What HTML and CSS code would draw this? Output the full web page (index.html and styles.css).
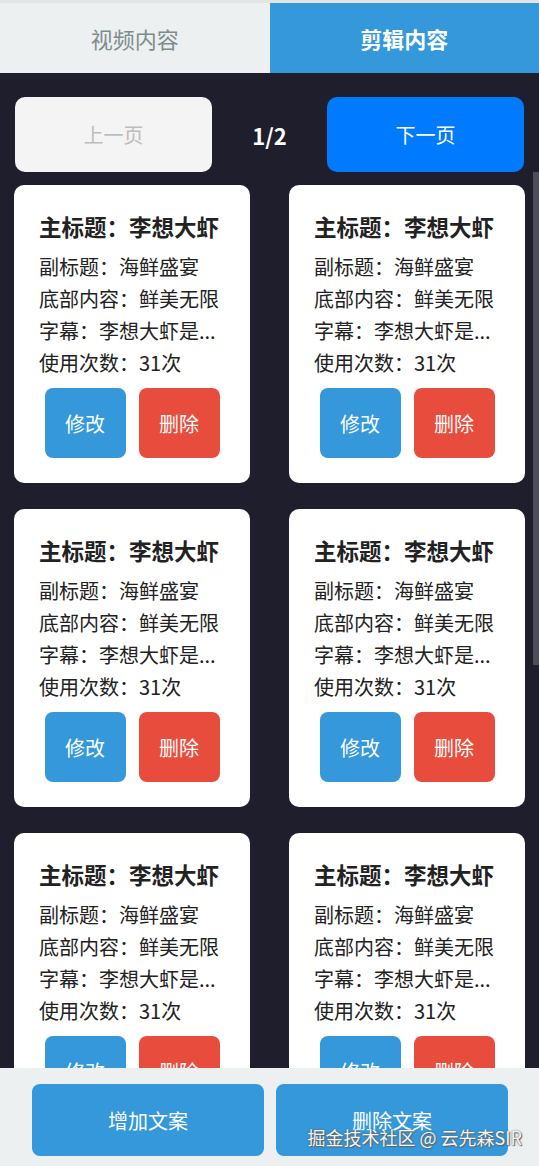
FILE: index.html
```html
<!DOCTYPE html>
<html lang="zh-CN">
<head>
  <meta charset="UTF-8" />
  <meta name="viewport" content="width=device-width, initial-scale=1.0" />
  <title>剪辑内容</title>
  <link rel="stylesheet" href="styles.css">
</head>
<body>
  <div class="tabs">
    <div class="tab">视频内容</div>
    <div class="tab active">剪辑内容</div>
  </div>
  <div class="main">
    <div class="pager">
      <button class="page-btn prev">上一页</button>
      <span class="page-num">1/2</span>
      <button class="page-btn next">下一页</button>
    </div>
    <div class="list-wrap">
      <div class="list" id="list"></div>
      <div class="thumb"></div>
    </div>
  </div>
  <div class="bottom">
    <button class="big-btn">增加文案</button>
    <button class="big-btn">删除文案</button>
  </div>
  <div class="watermark">掘金技术社区 @ 云先森SIR</div>

  <script>
    const item = {
      title: '李想大虾',
      sub: '海鲜盛宴',
      bottom: '鲜美无限',
      caption: '李想大虾是...',
      count: 31
    };

    const list = document.getElementById('list');
    for (let i = 0; i < 10; i++) {
      const card = document.createElement('div');
      card.className = 'card';
      card.innerHTML =
        '<div class="card-title">主标题：' + item.title + '</div>' +
        '<div class="card-line">副标题：' + item.sub + '</div>' +
        '<div class="card-line">底部内容：' + item.bottom + '</div>' +
        '<div class="card-line">字幕：' + item.caption + '</div>' +
        '<div class="card-line">使用次数：' + item.count + '次</div>' +
        '<div class="card-actions">' +
          '<button class="btn edit">修改</button>' +
          '<button class="btn del">删除</button>' +
        '</div>';
      list.appendChild(card);
    }

    // scroll thumb, since the headless view hides native scrollbars
    const thumb = document.querySelector('.thumb');
    function syncThumb() {
      const ratio = list.clientHeight / list.scrollHeight;
      thumb.style.height = (list.clientHeight * ratio) + 'px';
      thumb.style.top = (list.scrollTop * ratio) + 'px';
    }
    list.addEventListener('scroll', syncThumb);
    syncThumb();
  </script>
</body>
</html>
```

FILE: styles.css
```css
* { box-sizing: border-box; margin: 0; padding: 0; }
html, body { height: 100%; }
body {
  font-family: "Noto Sans CJK SC", "Noto Sans", sans-serif;
  background: #1e1e2d;
  display: flex;
  flex-direction: column;
  height: 100vh;
  overflow: hidden;
  border-top: 3px solid #e2e4e6;
}
button { font-family: inherit; border: none; cursor: pointer; }

.tabs { display: flex; height: 70px; }
.tab {
  flex: 1;
  display: flex;
  align-items: center;
  justify-content: center;
  font-size: 22px;
  background: #ecf0f1;
  color: #7f8c8d;
}
.tab.active {
  background: #3498db;
  color: white;
  font-weight: bold;
}

.main {
  flex: 1;
  min-height: 0;
  display: flex;
  flex-direction: column;
}
.pager {
  display: flex;
  align-items: center;
  justify-content: space-between;
  padding: 24px 15px 0 15px;
}
.page-btn {
  width: 197px;
  height: 75px;
  border-radius: 10px;
  font-size: 20px;
}
.prev { background: #f4f4f4; color: #bdbdbd; }
.next { background: #007bff; color: white; }
.page-num {
  color: white;
  font-size: 22px;
  font-weight: bold;
}

.list-wrap {
  flex: 1;
  min-height: 0;
  position: relative;
}
.list {
  height: 100%;
  overflow-y: auto;
  scrollbar-width: none;
  padding: 13px 7px 20px 14px;
  display: grid;
  grid-template-columns: 236px 236px;
  column-gap: 39px;
  row-gap: 26px;
  align-content: start;
}
.list::-webkit-scrollbar { display: none; }
.thumb {
  position: absolute;
  right: 0;
  top: 0;
  width: 6px;
  background: #4e4e58;
}

.card {
  background: white;
  border-radius: 10px;
  padding: 25px 25px;
  height: 298px;
  color: #222;
}
.card-title {
  font-size: 22.5px;
  font-weight: bold;
  line-height: 32px;
  margin-bottom: 9px;
  white-space: nowrap;
}
.card-line {
  font-size: 20px;
  line-height: 32px;
  white-space: nowrap;
}
.card-actions {
  display: flex;
  justify-content: center;
  gap: 13px;
  margin-top: 9px;
}
.btn {
  width: 81px;
  height: 70px;
  border-radius: 8px;
  color: white;
  font-size: 20px;
}
.edit { background: #3498db; }
.del { background: #e74c3c; }

.bottom {
  background: #ecf0f1;
  height: 98px;
  display: flex;
  gap: 12px;
  padding: 16px 31px 10px 32px;
}
.big-btn {
  flex: 1;
  height: 72px;
  border-radius: 8px;
  background: #3498db;
  color: white;
  font-size: 20px;
}

.watermark {
  position: absolute;
  right: 17px;
  bottom: 16px;
  font-size: 18px;
  color: #f4f4f4;
  text-shadow: 0 0 2px #555, 1px 1px 1px #666;
  white-space: nowrap;
}
```
